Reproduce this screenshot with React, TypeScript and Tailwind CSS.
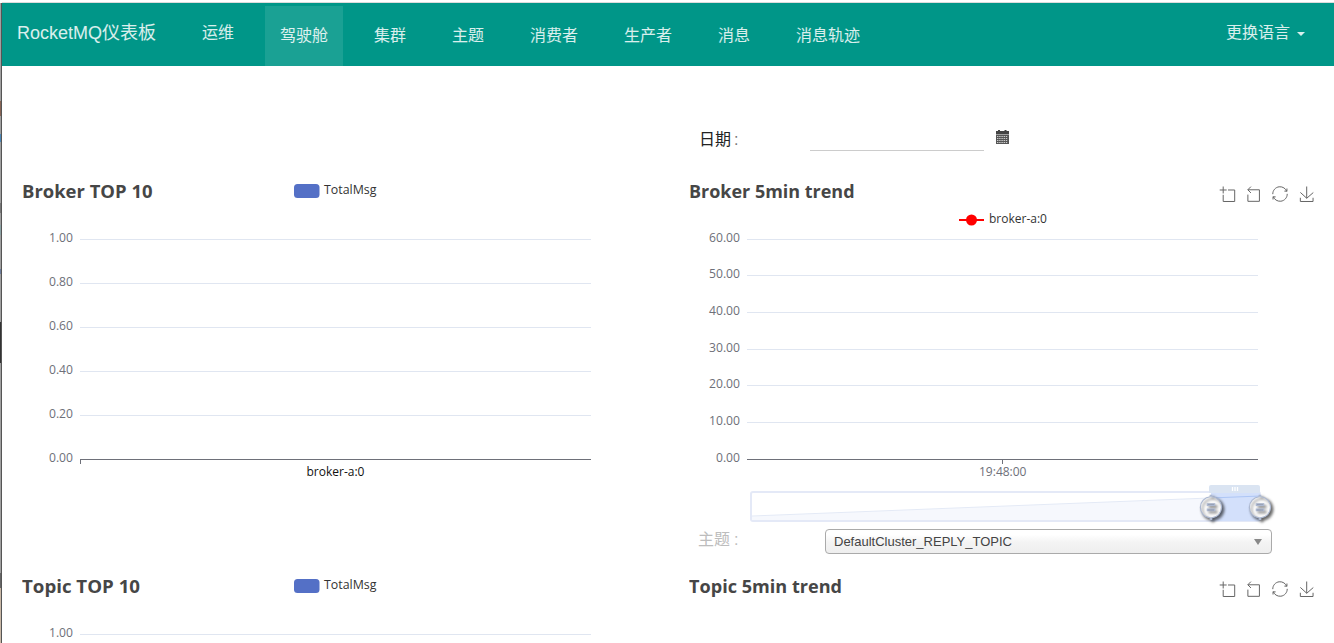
import { ReactNode } from "react";

const CHART_FONT = "font-['Open_Sans','Noto_Sans_CJK_SC',sans-serif]";

const PLOT_LEFT = 58;
const PLOT_RIGHT = 568;
const PLOT_TOP = 69;

const navItems = [
  { label: "驾驶舱", active: true },
  { label: "集群" },
  { label: "主题" },
  { label: "消费者" },
  { label: "生产者" },
  { label: "消息" },
  { label: "消息轨迹" },
];

const toolIcons = [
  { x: 538.2, cx: 29, cy: 29, d: "M0,13.5h26.9 M13.5,26.9V0 M32.1,13.5H58V58H13.5V32.1" },
  { x: 564.6, cx: 32.4, cy: 29.8, d: "M22,1.4L9.9,13.5l12.3,12.3 M10.3,13.5H54.9v44.6H10.3v-26" },
  {
    x: 591,
    cx: 30,
    cy: 30,
    d: "M47,18.9h9.8V8.7 M56.3,20.1C52.1,9,40.5,0.6,26.8,2.1C12.6,3.7,1.6,16.2,2.1,30.6 M13,41.1H3.1v10.2 M3.7,39.9c4.2,11.1,15.8,19.5,29.5,18c14.2-1.6,25.2-14.1,24.7-28.5",
  },
  {
    x: 617.8,
    cx: 29.6,
    cy: 29,
    d: "M4.7,22.9L29.3,45.5L54.7,23.4M4.6,43.6L4.6,58L53.8,58L53.8,43.6M29.2,45.1L29.2,0",
  },
];

interface ChartFrameProps {
  title: string;
  titleWidth: number;
  ticks: string[];
  tickGap?: number;
  height?: number;
  children?: ReactNode;
}

function ChartFrame({ title, titleWidth, ticks, tickGap = 44, height = 355, children }: ChartFrameProps) {
  return (
    <svg width={640} height={height} className={`block shrink-0 ${CHART_FONT}`}>
      <text
        x={0}
        y={28}
        fontSize={18}
        fontWeight={700}
        fill="#464646"
        textLength={titleWidth}
        lengthAdjust="spacingAndGlyphs"
      >
        {title}
      </text>
      {ticks.map((tick, i) => {
        const y = Math.floor(PLOT_TOP + i * tickGap);
        const isAxis = tick === "0.00";
        return (
          <g key={tick}>
            <text
              x={51}
              y={y + 3}
              fontSize={12}
              fill="#6e7079"
              textAnchor="end"
              textLength={tick.length > 4 ? 31 : 24}
              lengthAdjust="spacingAndGlyphs"
            >
              {tick}
            </text>
            <rect
              x={PLOT_LEFT}
              y={y}
              width={PLOT_RIGHT - PLOT_LEFT + 1}
              height={1}
              fill={isAxis ? "#6e7079" : "#e0e6f1"}
            />
          </g>
        );
      })}
      {children}
    </svg>
  );
}

function BarLegend() {
  return (
    <g>
      <rect x={272} y={14} width={25.5} height={14} rx={3.5} fill="#5470c6" />
      <text x={302} y={24} fontSize={12} fill="#333" textLength={52.5} lengthAdjust="spacingAndGlyphs">
        TotalMsg
      </text>
    </g>
  );
}

function Toolbox() {
  return (
    <g fill="none" stroke="#666" strokeWidth={1}>
      {toolIcons.map((icon) => (
        <path
          key={icon.x}
          d={icon.d}
          vectorEffect="non-scaling-stroke"
          transform={`translate(${icon.x} 24) scale(0.2586) translate(${-icon.cx} ${-icon.cy})`}
        />
      ))}
    </g>
  );
}

const HANDLE_PATH =
  "M10.7,11.9v-1.3H9.3v1.3c-4.9,0.3-8.8,4.4-8.8,9.4c0,5,3.9,9.1,8.8,9.4v1.3h1.3v-1.3c4.9-0.3,8.8-4.4,8.8-9.4C19.5,16.3,15.6,12.2,10.7,11.9z M13.3,24.4H6.7V23h6.6V24.4z M13.3,19.6H6.7v-1.4h6.6V19.6z";

function ZoomHandle({ x }: { x: number }) {
  const transform = `translate(${x} 337.3) scale(1.12) translate(-10 -21.3)`;
  // fill and outline cast their own shadows, the outline's falls on the disc
  return (
    <g>
      <g className="drop-shadow-[2px_2px_1.5px_rgba(0,0,0,0.6)]">
        <path d={HANDLE_PATH} transform={transform} fill="#fff" />
      </g>
      <g className="drop-shadow-[2px_2px_1.5px_rgba(0,0,0,0.6)]">
        <path
          d={HANDLE_PATH}
          transform={transform}
          fill="none"
          stroke="#acb8d1"
          strokeWidth={1.2}
          vectorEffect="non-scaling-stroke"
        />
      </g>
    </g>
  );
}

function ZoomSlider() {
  return (
    <g>
      <rect x={62} y={322} width={509} height={29} rx={2} fill="#fff" stroke="#e4e9f7" strokeWidth={2} />
      <path d="M63,346L571,326V350H63z" fill="#f6f8fd" />
      <path d="M63,346L571,326" stroke="#e4eaf6" fill="none" />
      <rect x={522} y={322} width={49} height={29} fill="#d3e0fb" />
      <path d="M522,328L571,326" stroke="#adc6f5" fill="none" />
      <path d="M520,323v-6q0-2 2-2h47q2 0 2 2v6z" fill="#dae4f2" />
      <path d="M543.5,317v4M546,317v4M548.5,317v4" stroke="#fff" strokeWidth={1.3} />
      <ZoomHandle x={522} />
      <ZoomHandle x={571} />
    </g>
  );
}

function CalendarIcon() {
  return (
    <svg width={14} height={15} viewBox="0 0 14 15" className="mt-[64px] ml-[11px] block">
      <path d="M3 0h2v1h4.500V0h2v1H14V4.500H1V1h2z" fill="#444" />
      <path d="M1 5h13v9H1z" fill="#555" />
      <path
        d="M2 6.500h11M2 8.500h11M2 10.500h11M2 12.500h11"
        stroke="#ccc"
        strokeWidth={1}
        strokeDasharray="1.400 .8"
      />
    </svg>
  );
}

function Navbar() {
  return (
    <nav className="mt-[2px] flex h-16 shrink-0 border-t border-[#dcdcdc] bg-[#009688] text-base text-white/85">
      <a className="ml-[15px] w-[155px] pt-[18px] text-lg leading-6 whitespace-nowrap">RocketMQ仪表板</a>
      <div className="ml-[15px] flex gap-4">
        <a className="px-[15px] pt-[18px] leading-6">运维</a>
        {navItems.map((item) => (
          <a
            key={item.label}
            className={`mt-[3px] px-[15px] pt-[18px] leading-6 ${item.active ? "bg-white/10" : ""}`}
          >
            {item.label}
          </a>
        ))}
      </div>
      <a className="mr-[29px] ml-auto flex items-start pt-[18px] leading-6">
        更换语言
        <span className="mt-[11px] ml-[7px] border-x-4 border-t-4 border-x-transparent border-t-white/85" />
      </a>
    </nav>
  );
}

// sliver of the window behind the page
function WindowEdge() {
  return (
    <div className="mt-[3px] flex w-[2px] shrink-0 flex-col border-r border-[#555] bg-[#a0a0a0]">
      <div className="mt-[98px] h-[15px] bg-[#876455]" />
      <div className="mt-[18px] h-2 bg-[#4d86b5]" />
      <div className="mt-[61px] h-[10px] bg-[#777]" />
      <div className="mt-3 h-[10px] bg-[#8ba3a5]" />
      <div className="mt-[34px] h-[5px] bg-[#6d7d9c]" />
      <div className="mt-[48px] h-[41px] bg-[#333]" />
      <div className="mt-[210px] h-[15px] bg-[#666]" />
      <div className="grow bg-[#c9b8a6]" />
    </div>
  );
}

export default function App() {
  return (
    <div className="flex h-[643px] w-[1334px] overflow-hidden bg-white font-['Liberation_Sans','Noto_Sans_CJK_SC',sans-serif]">
      <WindowEdge />
      <div className="flex min-w-0 grow flex-col">
        <Navbar />

        <div className="flex h-[104px] shrink-0 pl-[697px] text-base text-[#222]">
          <label className="w-[111px] pt-[62px] leading-6">
            日期<span className="ml-[3px] text-[#777]">:</span>
          </label>
          <div className="h-[85px] w-[174px] border-b border-[#ccc]" />
          <CalendarIcon />
        </div>

        <div className="flex h-[355px] shrink-0 gap-[27px] pl-5">
          <ChartFrame title="Broker TOP 10" titleWidth={130.5} ticks={["1.00", "0.80", "0.60", "0.40", "0.20", "0.00"]}>
            <BarLegend />
            <rect x={58} y={289} width={1} height={5} fill="#6e7079" />
            <text x={284.5} y={306} fontSize={12} fill="#111" textLength={58} lengthAdjust="spacingAndGlyphs">
              broker-a:0
            </text>
          </ChartFrame>
          <ChartFrame
            title="Broker 5min trend"
            titleWidth={165.5}
            ticks={["60.00", "50.00", "40.00", "30.00", "20.00", "10.00", "0.00"]}
            tickGap={36.67}
          >
            <path d="M270,50h25" stroke="#f00" strokeWidth={2} />
            <circle cx={282.5} cy={50} r={5.5} fill="#f00" />
            <text x={300} y={53} fontSize={12} fill="#333" textLength={58} lengthAdjust="spacingAndGlyphs">
              broker-a:0
            </text>
            <rect x={313} y={289} width={1} height={5} fill="#6e7079" />
            <text x={290} y={306} fontSize={12} fill="#6e7079" textLength={47.5} lengthAdjust="spacingAndGlyphs">
              19:48:00
            </text>
            <Toolbox />
            <ZoomSlider />
          </ChartFrame>
        </div>

        <div className="flex h-10 shrink-0 pl-[696px]">
          <label className="w-[127px] pt-[3px] leading-6 text-[#bdbdbd]">
            主题<span className="ml-[4px]">:</span>
          </label>
          <div className="mt-1 flex h-[25px] w-[447px] items-center justify-between rounded-[4px] border border-[#aaa] bg-linear-to-b from-white from-20% via-[#f4f4f4] via-52% to-[#eee] pr-[9px] pl-2 text-[13px] text-[#444]">
            DefaultCluster_REPLY_TOPIC
            <span className="border-x-[4px] border-t-[6px] border-x-transparent border-t-[#888]" />
          </div>
        </div>

        <div className="flex grow gap-[27px] pl-5">
          <ChartFrame title="Topic TOP 10" titleWidth={118} ticks={["1.00"]} height={78}>
            <BarLegend />
          </ChartFrame>
          <ChartFrame title="Topic 5min trend" titleWidth={153} ticks={[]} height={78}>
            <Toolbox />
          </ChartFrame>
        </div>
      </div>
    </div>
  );
}
